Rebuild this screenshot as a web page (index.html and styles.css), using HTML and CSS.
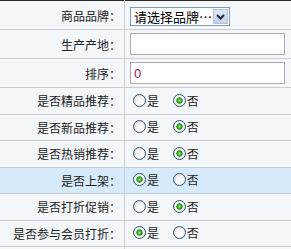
FILE: index.html
```html
<!DOCTYPE html>
<html lang="zh-CN">
<head>
    <meta charset="UTF-8">
    <title>商品属性</title>
    <link rel="stylesheet" href="styles.css">
</head>
<body>
    <table class="form-table">
        <tr class="row-input">
            <td class="label">商品品牌：</td>
            <td class="field">
                <div class="brand-select">
                    <span class="brand-text">请选择品牌…</span>
                    <span class="brand-arrow">
                        <svg width="9" height="6" viewBox="0 0 9 6"><path d="M1 1 L4.5 4.5 L8 1" fill="none" stroke="#1d2b44" stroke-width="2"/></svg>
                    </span>
                </div>
            </td>
        </tr>
        <tr class="row-input">
            <td class="label">生产产地：</td>
            <td class="field"><input class="text-box" type="text"></td>
        </tr>
        <tr class="row-input">
            <td class="label">排序：</td>
            <td class="field"><input class="text-box sort-box" type="text" value="0"></td>
        </tr>
        <tr class="row-radio">
            <td class="label">是否精品推荐：</td>
            <td class="field">
                <label class="opt"><input type="radio" name="jingpin">是</label>
                <label class="opt"><input type="radio" name="jingpin" checked>否</label>
            </td>
        </tr>
        <tr class="row-radio">
            <td class="label">是否新品推荐：</td>
            <td class="field">
                <label class="opt"><input type="radio" name="xinpin">是</label>
                <label class="opt"><input type="radio" name="xinpin" checked>否</label>
            </td>
        </tr>
        <tr class="row-radio">
            <td class="label">是否热销推荐：</td>
            <td class="field">
                <label class="opt"><input type="radio" name="rexiao">是</label>
                <label class="opt"><input type="radio" name="rexiao" checked>否</label>
            </td>
        </tr>
        <tr class="row-radio active">
            <td class="label">是否上架：</td>
            <td class="field">
                <label class="opt"><input type="radio" name="shangjia" checked>是</label>
                <label class="opt"><input type="radio" name="shangjia">否</label>
            </td>
        </tr>
        <tr class="row-radio">
            <td class="label">是否打折促销：</td>
            <td class="field">
                <label class="opt"><input type="radio" name="dazhe">是</label>
                <label class="opt"><input type="radio" name="dazhe" checked>否</label>
            </td>
        </tr>
        <tr class="row-radio">
            <td class="label">是否参与会员打折：</td>
            <td class="field">
                <label class="opt"><input type="radio" name="huiyuan" checked>是</label>
                <label class="opt"><input type="radio" name="huiyuan">否</label>
            </td>
        </tr>
        <tr class="row-radio">
            <td class="label"></td>
            <td class="field"></td>
        </tr>
    </table>
</body>
</html>
```

FILE: styles.css
```css
body {
    margin: 0;
    background-color: #f4f7fa;
    font-family: "Noto Sans CJK SC", sans-serif;
    font-size: 12px;
    color: #222;
}

.form-table {
    width: 291px;
    border-collapse: collapse;
    border-top: 1px solid #2b2b2b;
}

.form-table td {
    border-bottom: 1px solid #c8ced5;
    padding: 0;
    background-color: #f4f7fa;
}

.label {
    width: 121px;
    padding-right: 3px !important;
    text-align: right;
    border-right: 1px solid #c8ced5;
    white-space: nowrap;
}

.field {
    padding-left: 5px !important;
}

.row-input td {
    height: 28px;
}

.row-radio td {
    height: 25.5px;
}

.row-radio.active td {
    background-color: #d7eafb;
}

/* 品牌下拉 */
.brand-select {
    display: flex;
    align-items: center;
    width: 98px;
    height: 17px;
    margin-top: 3px;
    border: 1px solid #7f9db9;
    background-color: #fff;
    font-size: 13px;
    color: #000;
}

.brand-text {
    flex: 1;
    padding-left: 3px;
    white-space: nowrap;
    overflow: hidden;
}

.brand-arrow {
    display: flex;
    align-items: center;
    justify-content: center;
    width: 15px;
    height: 15px;
    margin-right: 1px;
    border: 1px solid #b6c2d9;
    box-sizing: border-box;
    background: linear-gradient(#dfe6f2, #c5d0e4);
}

.text-box {
    display: block;
    width: 155px;
    height: 22px;
    box-sizing: border-box;
    margin: 0;
    padding: 0 3px;
    border: 1px solid #a5abb1;
    background-color: #fff;
    font-family: "Liberation Sans", sans-serif;
    font-size: 13px;
}

.sort-box {
    color: #8a1870;
}

/* 单选 */
.opt {
    display: inline-flex;
    align-items: center;
    margin-right: 8px;
}

.opt input {
    appearance: none;
    width: 13px;
    height: 13px;
    margin: 0 1px 0 3px;
    border: 1px solid #2d5078;
    border-radius: 50%;
    background: radial-gradient(circle at 60% 65%, #ffffff 20%, #dcdcd6 90%);
}

.opt input:checked {
    background: radial-gradient(circle, #b8f0a8 0, #2aa019 2px, #3cb42c 3px, #ffffff 3.5px, #dcdcd6 100%);
}
```
